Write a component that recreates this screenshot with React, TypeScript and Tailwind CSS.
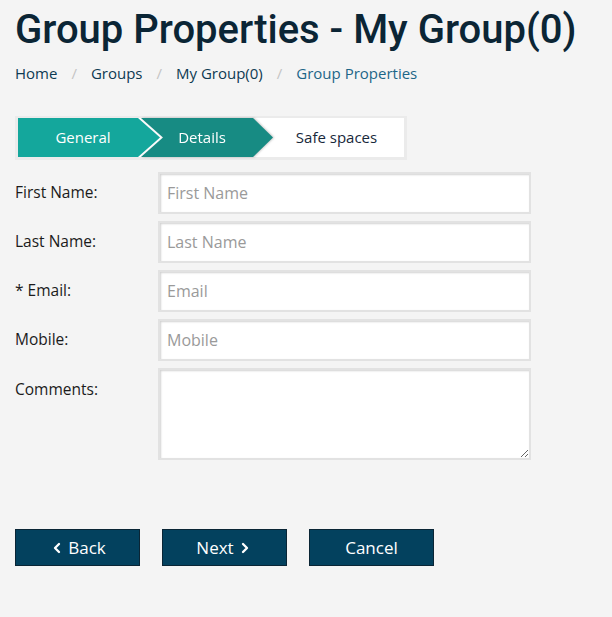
import React from "react";
import { ChevronLeft, ChevronRight } from "lucide-react";

const body = { fontFamily: '"Open Sans", "Noto Sans", sans-serif' };

function Field({ label, placeholder }: { label: string; placeholder: string }) {
  return (
    <div className="flex items-center h-[42px]">
      <label className="w-[143px] text-[15.5px] text-[#1b1b1b]">{label}</label>
      <input
        placeholder={placeholder}
        className="w-[373px] h-[42px] bg-white border-2 border-[#e2e2e2] shadow-[inset_1px_1px_2px_rgba(0,0,0,0.18)] px-[7px] text-[16px] text-[#333] placeholder:text-[#9a9a9a] outline-none"
      />
    </div>
  );
}

export default function App() {
  return (
    <div className="min-h-[617px] w-full bg-[#f4f4f4] px-[15px] pt-[4px]" style={body}>
      <h1
        className="text-[40px] leading-[52px] font-medium text-[#0b2535]"
        style={{ fontFamily: 'Roboto, sans-serif' }}
      >
        Group Properties - My Group(0)
      </h1>
      <nav className="mt-[5px] flex items-center text-[15px] text-[#0d3a52] h-[24px]">
        <span>Home</span>
        <span className="px-[14px] text-[#c4c4c4]">/</span>
        <span>Groups</span>
        <span className="px-[14px] text-[#c4c4c4]">/</span>
        <span>My Group(0)</span>
        <span className="px-[14px] text-[#c4c4c4]">/</span>
        <span className="text-[#1d6688]">Group Properties</span>
      </nav>

      <div className="mt-[31px] w-[392px] h-[44px] border-[3px] border-t-2 border-[#ebebeb] bg-white flex">
        <div
          className="w-[142px] h-[39px] bg-[#14a79c] text-white text-[15px] flex items-center justify-center pr-[12px] relative z-10"
          style={{ clipPath: "polygon(0 0, 120px 0, 142px 50%, 120px 100%, 0 100%)" }}
        >
          General
        </div>
        <div className="ml-[-19px] drop-shadow-[1px_0_1px_rgba(0,0,0,0.25)]">
          <div
            className="w-[132px] h-[39px] bg-[#178b83] text-white text-[15px] flex items-center justify-center pr-[10px]"
            style={{ clipPath: "polygon(0 0, 112px 0, 132px 50%, 112px 100%, 0 100%, 22px 50%)" }}
          >
            Details
          </div>
        </div>
        <div className="flex-1 h-[39px] flex items-center justify-center pr-[4px] text-[15px] text-[#18283a]">
          Safe spaces
        </div>
      </div>

      <div className="mt-[12px] flex flex-col gap-[7px]">
        <Field label="First Name:" placeholder="First Name" />
        <Field label="Last Name:" placeholder="Last Name" />
        <Field label="* Email:" placeholder="Email" />
        <Field label="Mobile:" placeholder="Mobile" />
        <div className="flex items-start">
          <label className="w-[143px] text-[15.5px] text-[#1b1b1b] pt-[10px]">Comments:</label>
          <textarea className="w-[373px] h-[92px] bg-white border-2 border-[#e2e2e2] shadow-[inset_1px_1px_2px_rgba(0,0,0,0.18)] px-[7px] outline-none" />
        </div>
      </div>

      <div className="mt-[69px] flex gap-[22px]">
        <button className="w-[125px] h-[37px] bg-[#03415e] border border-[#0a2535] text-white text-[17px] flex items-center justify-center gap-[3px]">
          <ChevronLeft size={16} strokeWidth={3.5} />
          Back
        </button>
        <button className="w-[125px] h-[37px] bg-[#03415e] border border-[#0a2535] text-white text-[17px] flex items-center justify-center gap-[3px]">
          Next
          <ChevronRight size={16} strokeWidth={3.5} />
        </button>
        <button className="w-[125px] h-[37px] bg-[#03415e] border border-[#0a2535] text-white text-[17px] flex items-center justify-center">
          Cancel
        </button>
      </div>
    </div>
  );
}
